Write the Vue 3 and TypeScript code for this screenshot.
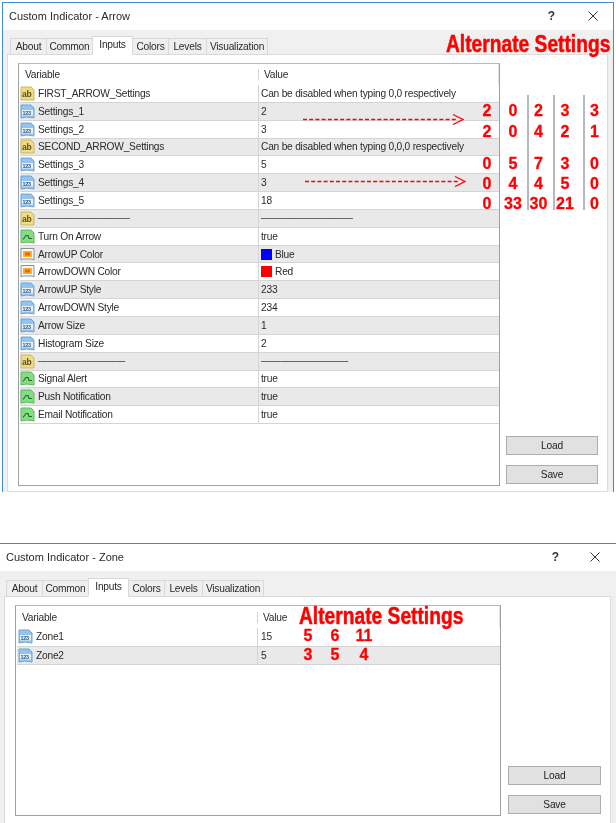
<script setup lang="ts">
type Icon = 'ab' | 'num' | 'bool' | 'color'
interface Row { icon: Icon; name: string; value: string; swatch?: string; sep?: string }

const sep = '—————————'
const arrowRows: Row[] = [
  { icon: 'ab', name: 'FIRST_ARROW_Settings', value: 'Can be disabled when typing 0,0 respectively' },
  { icon: 'num', name: 'Settings_1', value: '2' },
  { icon: 'num', name: 'Settings_2', value: '3' },
  { icon: 'ab', name: 'SECOND_ARROW_Settings', value: 'Can be disabled when typing 0,0,0 respectively' },
  { icon: 'num', name: 'Settings_3', value: '5' },
  { icon: 'num', name: 'Settings_4', value: '3' },
  { icon: 'num', name: 'Settings_5', value: '18' },
  { icon: 'ab', name: sep, value: sep, sep: 'grey' },
  { icon: 'bool', name: 'Turn On Arrow', value: 'true' },
  { icon: 'color', name: 'ArrowUP Color', value: 'Blue', swatch: '#0000ff' },
  { icon: 'color', name: 'ArrowDOWN Color', value: 'Red', swatch: '#ff0000' },
  { icon: 'num', name: 'ArrowUP Style', value: '233' },
  { icon: 'num', name: 'ArrowDOWN Style', value: '234' },
  { icon: 'num', name: 'Arrow Size', value: '1' },
  { icon: 'num', name: 'Histogram Size', value: '2' },
  { icon: 'ab', name: sep, value: sep, sep: 'black' },
  { icon: 'bool', name: 'Signal Alert', value: 'true' },
  { icon: 'bool', name: 'Push Notification', value: 'true' },
  { icon: 'bool', name: 'Email Notification', value: 'true' }
]
const zoneRows: Row[] = [
  { icon: 'num', name: 'Zone1', value: '15' },
  { icon: 'num', name: 'Zone2', value: '5' }
]
const tabs = ['About', 'Common', 'Inputs', 'Colors', 'Levels', 'Visualization']
const windows = [
  { id: 'w1', title: 'Custom Indicator - Arrow', rows: arrowRows },
  { id: 'w2', title: 'Custom Indicator - Zone', rows: zoneRows }
]
const arrowGrid: string[][] = [
  ['2', '0', '2', '3', '3'],
  ['2', '0', '4', '2', '1'],
  ['0', '5', '7', '3', '0'],
  ['0', '4', '4', '5', '0'],
  ['0', '33', '30', '21', '0']
]
const zoneGrid: string[][] = [
  ['5', '6', '11'],
  ['3', '5', '4']
]
</script>

<template>
  <div class="page">
    <section v-for="win in windows" :key="win.id" class="win" :class="win.id">
      <header class="title">
        <span class="title-text">{{ win.title }}</span>
        <span class="help">?</span>
        <svg class="close" width="10" height="10" viewBox="0 0 10 10"><path d="M0.5 0.5L9.5 9.5M9.5 0.5L0.5 9.5" stroke="#333" stroke-width="1" fill="none" /></svg>
      </header>
      <div class="body">
        <nav class="tabs">
          <span v-for="tab in tabs" :key="tab" class="tab" :class="[tab.toLowerCase(), { active: tab === 'Inputs' }]">{{ tab }}</span>
        </nav>
        <div class="panel">
          <div class="list">
            <div class="head">
              <span class="c1">Variable</span>
              <span class="c2">Value</span>
            </div>
            <div v-for="(row, i) in win.rows" :key="row.name + i" class="row" :class="{ alt: i % 2 === 1 }">
              <span class="c1">
                <svg class="ico" width="15" height="15" viewBox="0 0 15 15">
                  <template v-if="row.icon === 'ab'">
                    <path d="M1 1H11L14 4V14H1Z" fill="#eedc84" stroke="#c9b764" />
                    <text x="2" y="10.8" font-size="8.5" font-weight="700" font-family="Liberation Sans" fill="#5c5020">ab</text>
                  </template>
                  <template v-else-if="row.icon === 'num'">
                    <path d="M1 1H11L14 4V14L7 13L1 14Z" fill="#94c3ec" stroke="#6fa6d8" />
                    <rect x="2" y="6" width="11" height="5.5" fill="#e8f3fc" />
                    <text x="2.4" y="10.7" font-size="5.4" font-weight="700" font-family="Liberation Sans" fill="#23507f">123</text>
                  </template>
                  <template v-else-if="row.icon === 'bool'">
                    <path d="M1 1H11L14 4V14L7 13L1 14Z" fill="#86dc84" stroke="#5cb85c" />
                    <path d="M3 10.5L6 6.5H8L9 9.5H12" stroke="#1f6a2a" stroke-width="1.1" fill="none" />
                  </template>
                  <template v-else>
                    <path d="M1 1.5H14V13L12 12H3L1 13Z" fill="#f8f8f8" stroke="#8f8f8f" />
                    <rect x="3" y="4" width="9" height="6" fill="#ffb020" />
                    <rect x="5" y="5.5" width="5" height="3" fill="#ff5a10" />
                  </template>
                </svg>
                <span :class="row.sep ? 'sep ' + row.sep : ''">{{ row.name }}</span>
              </span>
              <span class="c2">
                <i v-if="row.swatch" class="swatch" :style="{ background: row.swatch }"></i>
                <span :class="row.sep ? 'sep ' + row.sep : ''">{{ row.value }}</span>
              </span>
            </div>
          </div>
          <div class="side">
            <button class="btn">Load</button>
            <button class="btn">Save</button>
          </div>
        </div>
      </div>
      <template v-if="win.id === 'w1'">
        <div class="alt-title a1">Alternate Settings</div>
        <svg class="dash d1" width="162" height="12" viewBox="0 0 162 12"><path d="M0 6.5H155" stroke="#f00" stroke-width="1.5" stroke-dasharray="4 2.2" fill="none" /><path d="M150 1.5L160 6.5L150 11.5" stroke="#f00" stroke-width="1.3" fill="none" /></svg>
        <svg class="dash d2" width="162" height="12" viewBox="0 0 162 12"><path d="M0 6.5H155" stroke="#f00" stroke-width="1.5" stroke-dasharray="4 2.2" fill="none" /><path d="M150 1.5L160 6.5L150 11.5" stroke="#f00" stroke-width="1.3" fill="none" /></svg>
        <i class="vline v1"></i><i class="vline v2"></i><i class="vline v3"></i>
        <div class="nums n1">
          <template v-for="(r, ri) in arrowGrid" :key="ri">
            <i v-if="ri === 2" class="gap"></i>
            <span v-for="(n, ci) in r" :key="ci">{{ n }}</span>
          </template>
        </div>
      </template>
      <template v-else>
        <div class="alt-title a2">Alternate Settings</div>
        <div class="nums n2">
          <template v-for="(r, ri) in zoneGrid" :key="ri">
            <span v-for="(n, ci) in r" :key="ci">{{ n }}</span>
          </template>
        </div>
      </template>
    </section>
  </div>
</template>

<style scoped>
.page {
  width: 616px;
  height: 823px;
  padding-top: 2px;
  box-sizing: border-box;
  overflow: hidden;
  background: #fff;
  position: relative;
  font-family: "Liberation Sans", Arial, sans-serif;
  color: #222;
  filter: blur(0.3px);
}
.win { box-sizing: border-box; display: flex; flex-direction: column; position: relative; }
.w1 { width: 612px; height: 490px; margin-left: 2px; border: 1px solid #3e8ccf; border-bottom: 0; }
.w2 { width: 616px; height: 280px; margin-top: 51px; border-top: 1px solid #4a86bd; }

.title { height: 27px; box-sizing: border-box; padding-bottom: 2px; display: flex; align-items: center; background: #fff; flex: none; }
.title-text { font-size: 11px; color: #2a2a2a; margin-left: 6px; }
.help { margin-left: auto; font-size: 12px; font-weight: 700; color: #333; }
.w1 .help { margin-right: 33px; }
.w2 .help { margin-right: 31px; }
.close { flex: none; }
.w1 .close { margin-right: 15px; }
.w2 .close { margin-right: 16px; }

.body { flex: 1; min-height: 0; background: #f0f0f0; display: flex; flex-direction: column; }
.tabs { display: flex; align-items: flex-end; height: 25px; flex: none; position: relative; z-index: 1; margin-bottom: -1px; }
.w1 .tabs { padding-left: 8px; }
.w2 .tabs { padding-left: 7px; height: 26px; }
.tab {
  box-sizing: border-box;
  height: 17px;
  line-height: 15px;
  text-align: center;
  font-size: 10.2px;
  letter-spacing: -0.22px;
  background: #efefef;
  border: 1px solid #d9d9d9;
  margin-left: -1px;
  color: #2a2a2a;
}
.about { width: 37px; }
.common { width: 47px; }
.inputs { width: 41px; }
.colors { width: 37px; }
.levels { width: 39px; }
.visualization { width: 62px; }
.tab.active { height: 19px; line-height: 15px; background: #fff; border-bottom-color: #fff; position: relative; z-index: 1; }

.panel {
  flex: 1;
  min-height: 0;
  box-sizing: border-box;
  background: #fff;
  border: 1px solid #dcdcdc;
  display: flex;
}
.w1 .panel { margin: 0 5px 0 4px; padding: 8px 0 5px 10px; }
.w2 .panel { margin: 0 5px 0 4px; padding: 8px 0 7px 10px; width: 607px; flex: none; height: 227px; border-bottom: 0; }

.list { box-sizing: border-box; background: #fff; border: 1px solid #9ba1a8; border-top-color: #b8b8b8; padding-left: 1px; flex: none; }
.w1 .list { width: 482px; }
.w2 .list { width: 486px; }
.head { display: flex; height: 21px; align-items: center; font-size: 10.2px; letter-spacing: -0.22px; color: #2a2a2a; box-shadow: inset -2px 0 0 -1px #e4e4e4; }
.w2 .head { height: 22px; }
.head .c1 { padding-left: 5px; }
.head .c2, .w2 .head .c2 { padding-left: 5px; align-self: stretch; line-height: 21px; }
.row { display: flex; height: 17.85px; box-sizing: border-box; border-bottom: 1px solid #d4d4d4; font-size: 10.2px; letter-spacing: -0.22px; color: #2a2a2a; align-items: stretch; }
.w2 .row { height: 18.5px; }
.row.alt { background: #e9e9e9; }
.c1 { flex: none; display: flex; align-items: center; box-sizing: border-box; border-right: 1px solid #d4d4d4; white-space: nowrap; }
.w1 .c1 { width: 239px; }
.w2 .c1 { width: 241px; }
.c2 { flex: 1; display: flex; align-items: center; padding-left: 2px; white-space: nowrap; overflow: hidden; }
.w2 .c2 { padding-left: 3px; }
.ico { margin: 0 3px 0 0; flex: none; }
.w2 .ico { margin-left: 1px; }
.swatch { width: 11px; height: 11px; margin-right: 3px; flex: none; }
.sep { line-height: 10px; letter-spacing: 0; }
.sep.grey { color: #555; font-size: 10.2px; -webkit-text-stroke: 0.3px #555; }
.sep.black { color: #111; font-size: 9.7px; }

.side { display: flex; flex-direction: column; justify-content: flex-end; gap: 10px; }
.w1 .side { margin-left: 6px; width: 92px; padding-bottom: 2px; }
.w2 .side { margin-left: 7px; width: 93px; padding-bottom: 2px; }
.btn {
  height: 19px;
  padding: 0;
  background: #e1e1e1;
  border: 1px solid #adadad;
  font: 10.2px "Liberation Sans", Arial, sans-serif;
  letter-spacing: -0.22px;
  color: #222;
}

.alt-title {
  position: absolute;
  font-weight: 700;
  color: #f00;
  white-space: nowrap;
  font-size: 23px;
  line-height: 20px;
  -webkit-text-stroke: 0.5px #f00;
  transform: scaleX(0.835);
  transform-origin: left center;
}
.a1 { left: 443px; top: 31px; }
.a2 { left: 299px; top: 62px; }
.dash { position: absolute; }
.d1 { left: 300px; top: 110px; }
.d2 { left: 302px; top: 172px; }
.vline { position: absolute; width: 2px; height: 115px; background: #b4b8c0; top: 92px; }
.v1 { left: 524px; }
.v2 { left: 550px; }
.v3 { left: 580px; }
.nums {
  position: absolute;
  display: grid;
  color: #f00;
  font-weight: 700;
  font-size: 16px;
  text-align: center;
  -webkit-text-stroke: 0.3px #f00;
}
.nums span { display: flex; align-items: center; justify-content: center; }
.gap { grid-column: 1 / -1; }
.n1 {
  left: 471px;
  top: 98px;
  grid-template-columns: 26px 26px 25px 28px 31px;
  grid-template-rows: 20px 22px 11px 20px 20px 20px;
}
.n2 {
  left: 295px;
  top: 82px;
  grid-template-columns: 26px 28px 30px;
  grid-template-rows: 19px 19px;
}
</style>
